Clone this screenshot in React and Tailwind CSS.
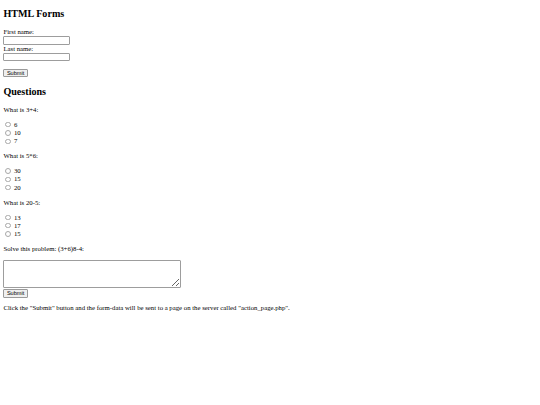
import React from 'react';

const questions = [
  { q: 'What is 3+4:', name: 'q1', options: ['6', '10', '7'] },
  { q: 'What is 5*6:', name: 'q2', options: ['30', '15', '20'] },
  { q: 'What is 20-5:', name: 'q3', options: ['13', '17', '15'] },
];

function SubmitButton() {
  return (
    <button
      type="submit"
      className="block h-[8.4px] px-[2.5px] bg-[#efefef] border border-[#9a9a9a] rounded-[1px] font-['Liberation_Sans',Arial,sans-serif] text-[5.6px] leading-[6px] text-black"
    >
      Submit
    </button>
  );
}

export default function App() {
  return (
    <div className="min-h-[405px] bg-white px-[3.4px] font-['Liberation_Serif','Times_New_Roman',serif] text-[6.75px] leading-[7.8px] text-black">
      <h2 className="pt-[8.4px] mb-[8.4px] text-[10.1px] leading-[11.6px] font-bold">HTML Forms</h2>

      {/* Name form */}
      <form>
        <label className="block">First name:</label>
        <input type="text" className="block w-[66.5px] h-[8.6px] border border-[#9d9d9d] rounded-[1px] bg-white" />
        <label className="block">Last name:</label>
        <input type="text" className="block w-[66.5px] h-[8.6px] border border-[#9d9d9d] rounded-[1px] bg-white" />
        <div className="h-[7.8px]"></div>
        <SubmitButton />
      </form>

      <h2 className="mt-[8.4px] mb-[8.4px] text-[10.1px] leading-[11.6px] font-bold">Questions</h2>

      <form>
        {questions.map((item, i) => (
          <div key={item.name}>
            <p className={i === 0 ? 'mb-[6.75px]' : 'my-[6.75px]'}>{item.q}</p>
            {item.options.map((opt) => (
              <div key={opt} className="flex items-center h-[8.4px]">
                <input
                  type="radio"
                  name={item.name}
                  className="appearance-none w-[5.4px] h-[5.4px] ml-[2.1px] mr-[3px] rounded-full border border-[#a8a8a8] bg-white"
                />
                <span>{opt}</span>
              </div>
            ))}
          </div>
        ))}

        <p className="my-[6.75px]">Solve this problem: (3+6)8-4:</p>
        <textarea className="block w-[178px] h-[28.5px] border border-[#9d9d9d] rounded-[1px] bg-white"></textarea>
        <div className="pt-[1px]">
          <SubmitButton />
        </div>
      </form>

      <p className="mt-[6.9px]">
        Click the "Submit" button and the form-data will be sent to a page on the server called "action_page.php".
      </p>
    </div>
  );
}
